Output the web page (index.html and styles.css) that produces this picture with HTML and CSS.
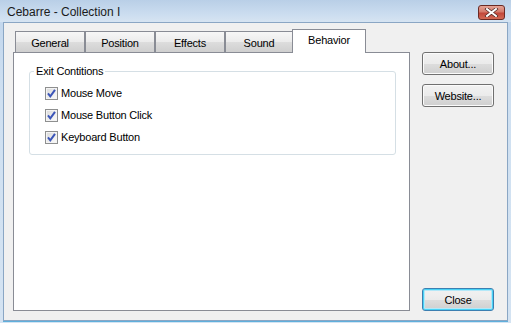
FILE: index.html
```html
<!DOCTYPE html>
<html>
<head>
<meta charset="utf-8">
<link rel="stylesheet" href="styles.css">
</head>
<body>
<div class="window">
  <div class="titlebar">
    <span class="title">Cebarre - Collection I</span>
    <div class="xbtn">
      <svg width="15" height="9" viewBox="0 0 15 9">
        <path d="M3 1 L12 8 M12 1 L3 8" stroke="#4a2320" stroke-width="3.4" stroke-linecap="square"/>
        <path d="M3 1 L12 8 M12 1 L3 8" stroke="#ffffff" stroke-width="2" stroke-linecap="square"/>
      </svg>
    </div>
  </div>
  <div class="client">
    <div class="tabs-col">
      <div class="tabstrip">
        <div class="tab t-general">General</div>
        <div class="tab t-position">Position</div>
        <div class="tab t-effects">Effects</div>
        <div class="tab t-sound">Sound</div>
        <div class="tab active">Behavior</div>
      </div>
      <div class="panel">
        <fieldset class="group">
          <legend>Exit Contitions</legend>
          <div class="check"><span class="box"><svg width="11" height="11" viewBox="0 0 11 11"><path d="M2 5.3 L4.3 8.3 L9 1.8" fill="none" stroke="#3b55b8" stroke-width="2"/></svg></span>Mouse Move</div>
          <div class="check"><span class="box"><svg width="11" height="11" viewBox="0 0 11 11"><path d="M2 5.3 L4.3 8.3 L9 1.8" fill="none" stroke="#3b55b8" stroke-width="2"/></svg></span>Mouse Button Click</div>
          <div class="check"><span class="box"><svg width="11" height="11" viewBox="0 0 11 11"><path d="M2 5.3 L4.3 8.3 L9 1.8" fill="none" stroke="#3b55b8" stroke-width="2"/></svg></span>Keyboard Button</div>
        </fieldset>
      </div>
    </div>
    <div class="side">
      <div class="btn">About...</div>
      <div class="btn btn-gap">Website...</div>
      <div class="btn default">Close</div>
    </div>
  </div>
</div>
</body>
</html>
```
FILE: styles.css
```css
html, body {
  margin: 0;
  padding: 0;
  background: #ffffff;
}
.window {
  width: 511px;
  height: 323px;
  box-sizing: border-box;
  display: flex;
  flex-direction: column;
  background: linear-gradient(#c0d5ec, #cfe0f1 30%, #d4e3f2);
  font-family: "Liberation Sans", Arial, sans-serif;
  font-size: 11px;
  letter-spacing: -0.2px;
  color: #000;
  overflow: hidden;
}
.titlebar {
  height: 22px;
  display: flex;
  align-items: flex-start;
  background: linear-gradient(#b9cfe7, #cadcef 60%, #d6e4f2);
}
.title {
  font-size: 12px;
  letter-spacing: 0;
  color: #1a1a1a;
  margin: 5px 0 0 7px;
  line-height: 14px;
}
.xbtn {
  margin: 5px 6px 0 auto;
  width: 27px;
  height: 15px;
  box-sizing: border-box;
  border: 1px solid #6b2a24;
  border-radius: 3px;
  background: linear-gradient(#e5a396, #d47a6b 45%, #c2473a 55%, #d36a55);
  display: flex;
  align-items: center;
  justify-content: center;
}
.xbtn svg {
  display: block;
}
.client {
  flex: 1;
  margin: 0 3px 2px 3px;
  border: 1px solid #8aa6c4;
  background: #f0f0f0;
  display: flex;
  padding: 6px 0 9px 9px;
  box-shadow: 0 1px 0 #5fb0dc;
}
.tabs-col {
  width: 397px;
  display: flex;
  flex-direction: column;
}
.tabstrip {
  height: 23px;
  display: flex;
  align-items: flex-end;
  padding-left: 2px;
}
.tab {
  box-sizing: border-box;
  height: 21px;
  border: 1px solid #898c95;
  border-bottom: none;
  background: linear-gradient(#f7f7f7, #ebebeb 50%, #dddddd 51%, #cfcfcf);
  display: flex;
  align-items: center;
  justify-content: center;
  padding-top: 2px;
}
.t-general { width: 70px; }
.t-position { width: 70px; }
.t-effects { width: 70px; }
.t-sound { width: 68px; }
.tab.active {
  width: 74px;
  height: 24px;
  margin: 0 0 -1px -1px;
  background: #ffffff;
  position: relative;
  z-index: 1;
  padding-top: 0;
  padding-bottom: 4px;
}
.panel {
  flex: 1;
  background: #ffffff;
  border: 1px solid #898c95;
  display: flex;
  flex-direction: column;
}
.group {
  margin: 12px 13px 0 15px;
  padding: 4px 0 6px 4px;
  border: 1px solid #d5dfe5;
  border-radius: 3px;
  min-width: 0;
}
.group legend {
  padding: 0 2px;
  line-height: 13px;
}
.check {
  height: 22px;
  display: flex;
  align-items: center;
  padding-left: 11px;
  gap: 3px;
}
.box {
  width: 13px;
  height: 13px;
  box-sizing: border-box;
  border: 1px solid #8e8f8f;
  background: linear-gradient(135deg, #d9d9d9, #f2f2f2 70%, #fbfbfb);
  box-shadow: inset 0 0 0 1px #f4f4f4;
  display: flex;
  align-items: center;
  justify-content: center;
}
.box svg {
  display: block;
}
.side {
  width: 72px;
  margin-left: 12px;
  padding-top: 23px;
  display: flex;
  flex-direction: column;
}
.btn {
  height: 23px;
  box-sizing: border-box;
  border: 1px solid #707070;
  border-radius: 3px;
  background: linear-gradient(#f2f2f2, #ebebeb 50%, #dddddd 51%, #cfcfcf);
  display: flex;
  align-items: center;
  justify-content: center;
  box-shadow: inset 0 0 0 1px #fbfbfb;
}
.btn-gap {
  margin-top: 9px;
}
.btn.default {
  margin-top: auto;
  border-color: #3c7fb1;
  box-shadow: inset 0 0 0 1px #48d2f5, inset 0 0 0 2px #b4e8f8;
}
```
